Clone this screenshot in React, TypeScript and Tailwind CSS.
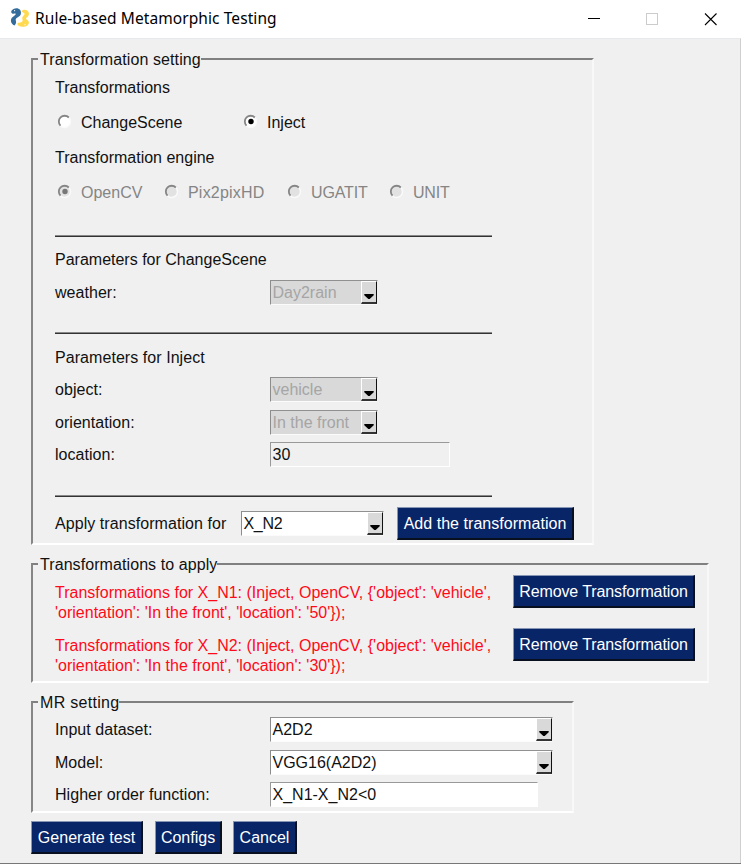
import type { ReactNode } from "react";

const FONT = "font-['Liberation_Sans',Arial,sans-serif]";

function Logo() {
  return (
    <svg width="20" height="20" viewBox="0 0 20 20" className="relative -top-px shrink-0">
      <path d="M1.2 4.200C1 2.200 2.800 1.600 4 .8c2-1 5-.5 6.200 1.300 1.300 2 .8 4.600-.6 6-1.300 1.200-3 1.700-3.700 2.800-.7 1.300.3 2.100.2 3.300-.1 1.500-1 2.500-1.700 3.400C2.400 16.600.8 14.800.9 12.300c.1-1.900 1.100-2.900 2.500-3.900 1.200-.9 2.700-1.700 2.300-2.600-.9-.8-3.300 1.100-4.500-1.600z" fill="#346c9c" />
      <path d="M11.600 3.200c2.300-2.600 6.800-1.400 7.300 2 .2 2-.7 3.300-2.200 4.400-.9.8-.6 1.500.2 2.200 1.600 1.100 2.400 2.200 1.800 4-1 2.400-3.700 3.200-6.300 2.900-2.400 0-4.800-.8-5-2.700.3-1.700 2.700-1 4-1.700 1.500-.9 1.400-2 1-3.200-.5-1.700.3-3 1.500-3.900 1-.8.8-1.800.1-2.200-.8-.5-2.200-.9-2.400-1.800z" fill="#ffd94f" />
      <circle cx="4.600" cy="2.700" r=".6" fill="#fff" />
      <circle cx="15" cy="16.700" r=".6" fill="#fff" />
    </svg>
  );
}

function TitleBar() {
  return (
    <header className="flex h-[38px] shrink-0 items-center bg-white pl-[10px]">
      <Logo />
      <h1 className="mb-[2px] ml-[5px] w-[553px] whitespace-nowrap font-['Noto_Sans',sans-serif] text-[15.500px] leading-[20px] tracking-[0.080px] text-black">
        Rule-based Metamorphic Testing
      </h1>
      <svg width="153" height="38" viewBox="0 0 153 38" className="shrink-0" fill="none" shapeRendering="crispEdges">
        <path d="M0 18.500h12" stroke="#000" />
        <rect x="58.500" y="13.500" width="11" height="11" stroke="#ccc" />
        <path d="M117 13.500l11.500 11.500M128.500 13.500L117 25" stroke="#000" strokeWidth="1.100" shapeRendering="auto" />
      </svg>
    </header>
  );
}

function Group({ title, titleClass, className, children }: { title: string; titleClass: string; className: string; children: ReactNode }) {
  return (
    <section className={`relative flex flex-col border-2 border-b-white border-l-[#868686] border-r-[#f8f8f8] border-t-[#808080] pl-[22px] ${className}`}>
      <h2 className={`absolute -top-[10px] left-[5px] whitespace-nowrap bg-[#f0f0f0] pl-[2px] leading-[20px] ${titleClass}`}>{title}</h2>
      {children}
    </section>
  );
}

function Radio({ checked, disabled, label, className }: { checked?: boolean; disabled?: boolean; label: string; className: string }) {
  return (
    <label className={`flex items-center whitespace-nowrap ${disabled ? "text-[#858585]" : ""} ${className}`}>
      <svg width="16" height="16" viewBox="0 0 16 16" className="mr-[9px] shrink-0">
        <circle cx="8.500" cy="7.500" r="5.800" fill={disabled ? "#e2e2e2" : "#fff"} />
        <path d="M4.500 11.700A5.800 5.800 0 0 0 12.800 3.500" fill="none" stroke="#fafafa" strokeWidth="1.500" />
        <path d="M4.500 11.700A5.800 5.800 0 0 1 12.800 3.500" fill="none" stroke="#858585" strokeWidth="1.800" />
        {checked && <circle cx="9" cy="7.500" r="2.700" fill={disabled ? "#777" : "#000"} />}
      </svg>
      <span className="pt-[1px]">{label}</span>
    </label>
  );
}

function Rule({ className }: { className: string }) {
  return (
    <div className={`shrink-0 ${className}`}>
      <div className="h-[2px] w-[437px] border-t border-[#888] bg-[#333]" />
    </div>
  );
}

function Field({ label, children }: { label: string; children: ReactNode }) {
  return (
    <div className="flex h-[32.500px] shrink-0 items-center">
      <span className="w-[215px] whitespace-nowrap pt-[1px] tracking-[0.040px]">{label}</span>
      {children}
    </div>
  );
}

function Combo({ value, disabled, className }: { value: string; disabled?: boolean; className: string }) {
  return (
    <div className={`flex h-[25px] shrink-0 border border-b-[#fbfbfb] border-l-[#8c8c8c] border-r-[#eee] border-t-[#909090] ${disabled ? "bg-[#d9d9d9] text-[#a5a5a5]" : "bg-white"} ${className}`}>
      <span className="flex-1 whitespace-nowrap pl-[1.500px] leading-[24px]">{value}</span>
      <span className="flex w-[16px] items-end justify-center border border-b-2 border-b-[#333] border-l-white border-r-[#111] border-t-white bg-[#d9d9d9] pb-[2px]">
        <svg width="10" height="6" viewBox="0 0 10 6"><path d="M.3 0h9.400v1.200L5.700 5H4.300L.3 1.200z" fill="#000" /></svg>
      </span>
    </div>
  );
}

function Entry({ value, className }: { value: string; className: string }) {
  return (
    <div className={`h-[25px] shrink-0 whitespace-nowrap border border-b-white border-l-[#999] border-r-white border-t-[#999] pl-[1.500px] leading-[24px] ${className}`}>
      {value}
    </div>
  );
}

function Button({ children, className }: { children: ReactNode; className: string }) {
  return (
    <button className={`h-[33px] shrink-0 whitespace-nowrap border border-b-2 border-r-2 border-b-[#08101f] border-l-[#8796b5] border-r-[#08101f] border-t-[#8796b5] bg-[#082567] text-center leading-[20px] text-white ${className}`}>
      {children}
    </button>
  );
}

export default function App() {
  return (
    <div className={`flex h-[864px] w-[741px] flex-col overflow-hidden bg-[#f0f0f0] text-[16px] leading-[20px] text-[#111] ${FONT}`}>
      <TitleBar />
      <main className="flex h-[825px] shrink-0 flex-col border-r border-t border-r-[#cfcfcf] border-t-[#e6eaec] pl-[31px] pt-[19px]">
        <Group title="Transformation setting" titleClass="tracking-[0.100px]" className="h-[487px] w-[563px] shrink-0 pt-[14px]">
          <div className="flex h-[27px] shrink-0 items-center">Transformations</div>
          <div className="flex h-[42px] shrink-0 items-center pl-[1px]">
            <Radio label="ChangeScene" className="w-[186px]" />
            <Radio label="Inject" checked className="" />
          </div>
          <div className="flex h-[28px] shrink-0 items-center pt-[1px]">Transformation engine</div>
          <div className="flex h-[42px] shrink-0 items-center pl-[1px]">
            <Radio label="OpenCV" checked disabled className="w-[107px]" />
            <Radio label="Pix2pixHD" disabled className="w-[123px] tracking-[0.200px]" />
            <Radio label="UGATIT" disabled className="w-[102px] tracking-[-0.150px]" />
            <Radio label="UNIT" disabled className="tracking-[-0.200px]" />
          </div>
          <Rule className="h-[30px] pt-[22px]" />
          <div className="flex h-[33px] shrink-0 items-center pt-[1px]">Parameters for ChangeScene</div>
          <Field label="weather:"><Combo value="Day2rain" disabled className="w-[108px]" /></Field>
          <Rule className="h-[32px] pt-[23px]" />
          <div className="flex h-[33px] shrink-0 items-center pt-[1px] tracking-[0.060px]">Parameters for Inject</div>
          <Field label="object:"><Combo value="vehicle" disabled className="w-[108px]" /></Field>
          <Field label="orientation:"><Combo value="In the front" disabled className="w-[108px]" /></Field>
          <Field label="location:"><Entry value="30" className="w-[180px]" /></Field>
          <Rule className="h-[36px] pt-[24px]" />
          <div className="flex h-[33px] shrink-0 items-center">
            <span className="w-[186px] whitespace-nowrap tracking-[0.060px]">Apply transformation for</span>
            <Combo value="X_N2" className="w-[143px] tracking-[-0.300px]" />
            <Button className="ml-[13px] w-[177px] pt-[1px] tracking-[0.040px]">Add the transformation</Button>
          </div>
        </Group>

        <Group title="Transformations to apply" titleClass="tracking-[0.080px]" className="mt-[18px] h-[120px] w-[678px] shrink-0 pt-[10px]">
          {["1", "2"].map((n) => (
            <div key={n} className="flex h-[53px] shrink-0 items-start">
              <p className="mt-[8px] w-[458px] whitespace-nowrap text-[#ff0a18]">
                {`Transformations for X_N${n}: (Inject, OpenCV, {'object': 'vehicle',`}
                <br />
                {`'orientation': 'In the front', 'location': '${n === "1" ? 50 : 30}'});`}
              </p>
              <Button className="w-[182px] pt-[2px] tracking-[-0.100px]">Remove Transformation</Button>
            </div>
          ))}
        </Group>

        <Group title="MR setting" titleClass="tracking-[0.300px]" className="mt-[18px] h-[112px] w-[543px] shrink-0 pt-[10.500px]">
          <Field label="Input dataset:"><Combo value="A2D2" className="w-[283px]" /></Field>
          <Field label="Model:"><Combo value="VGG16(A2D2)" className="w-[283px]" /></Field>
          <Field label="Higher order function:"><Entry value="X_N1-X_N2<0" className="w-[268px] bg-white" /></Field>
        </Group>

        <div className="mt-[8px] flex shrink-0">
          <Button className="w-[112px] pt-[1px] tracking-[0.040px]">Generate test</Button>
          <Button className="ml-[12px] w-[67px] pt-[1px]">Configs</Button>
          <Button className="ml-[11px] w-[64px] pt-[1px]">Cancel</Button>
        </div>
      </main>
      <footer className="h-px shrink-0 bg-[#777]" />
    </div>
  );
}
